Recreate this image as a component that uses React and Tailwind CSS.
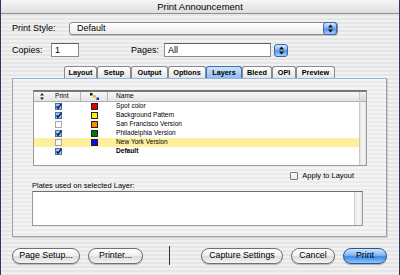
import React from 'react';

const tabs = [
  { label: 'Layout', w: 'w-[33px]' },
  { label: 'Setup', w: 'w-[34px]' },
  { label: 'Output', w: 'w-[37px]' },
  { label: 'Options', w: 'w-[38px]' },
  { label: 'Layers', w: 'w-[36px]', active: true },
  { label: 'Bleed', w: 'w-[30px]' },
  { label: 'OPI', w: 'w-[24px]' },
  { label: 'Preview', w: 'w-[39px]' },
];

const layers = [
  { name: 'Spot color', print: true, color: 'bg-[#e00000]' },
  { name: 'Background Pattern', print: true, color: 'bg-[#fff200]' },
  { name: 'San Francisco Version', print: false, color: 'bg-[#ff8a00]' },
  { name: 'Philadelphia Version', print: true, color: 'bg-[#007a00]' },
  { name: 'New York Version', print: false, color: 'bg-[#0010f0]', selected: true },
  { name: 'Default', print: true, color: '', bold: true },
];

// aqua blue up/down popup arrows
const Stepper = () => (
  <div className="w-[14px] h-[13px] rounded-[3px] border border-[#3568ad] bg-[linear-gradient(180deg,#d6eaff_0%,#79b0f0_48%,#4f8fe0_52%,#a9d0fa_100%)] flex items-center justify-center shrink-0">
    <svg width="5" height="9" viewBox="0 0 5 9">
      <path d="M2.5 0.5L5 3.5H0Z M2.5 8.5L0 5.5H5Z" fill="#101010" />
    </svg>
  </div>
);

const SmallCheck = ({ checked }) => (
  <svg width="7" height="7" viewBox="0 0 7 7">
    <rect x="0.5" y="0.5" width="6" height="6" fill={checked ? '#9cc3f0' : '#fbfbfb'} stroke={checked ? '#4a6fa8' : '#a8a8a8'} />
    {checked && <path d="M1.6 3.4L3 5.3L6.6 0.6" stroke="#0c1c50" strokeWidth="1.5" fill="none" />}
  </svg>
);

const AquaButton = ({ children, w }) => (
  <button className={`${w} h-[16px] rounded-full border border-[#707070] bg-[linear-gradient(180deg,#ffffff_0%,#f2f2f2_45%,#dcdcdc_55%,#f4f4f4_100%)] text-[8.8px] leading-none text-black flex items-center justify-center shadow-[0_1px_1px_rgba(0,0,0,0.25)]`}>
    {children}
  </button>
);

export default function App() {
  return (
    <div className="w-[400px] h-[275px] overflow-hidden border-x border-[#2c3a5c] bg-[repeating-linear-gradient(180deg,#f1f1f1_0px,#f1f1f1_2px,#e6e6e6_2px,#e6e6e6_4px)] font-['Liberation_Sans',Arial,sans-serif] text-black">
      {/* title bar */}
      <div className="h-[14px] border-b border-[#8c8c8c] bg-[linear-gradient(180deg,#f6f6f6,#dedede)] flex items-center justify-center text-[9.5px] leading-none">
        Print Announcement
      </div>

      <div className="px-[11px]">
        {/* print style */}
        <div className="mt-[8px] flex items-center h-[13px]">
          <span className="w-[57px] text-[9px] leading-none">Print Style:</span>
          <div className="w-[269px] h-[13px] rounded-[3px] border border-[#8a8a8a] bg-[linear-gradient(180deg,#ffffff,#ececec)] flex items-center justify-between pl-[7px] shadow-[0_1px_0_rgba(0,0,0,0.15)]">
            <span className="text-[9px] leading-none">Default</span>
            <Stepper />
          </div>
        </div>

        {/* copies / pages */}
        <div className="mt-[8px] flex items-center h-[14px]">
          <span className="w-[39px] text-[9px] leading-none">Copies:</span>
          <div className="w-[28px] h-[14px] border border-[#8a8a8a] border-t-[#5f5f5f] bg-white flex items-center pl-[3px] text-[9px] leading-none">1</div>
          <span className="ml-[52px] w-[33px] text-[9px] leading-none">Pages:</span>
          <div className="w-[107px] h-[14px] border border-[#8a8a8a] border-t-[#5f5f5f] bg-white flex items-center pl-[3px] text-[9px] leading-none">All</div>
          <div className="ml-[3px]">
            <Stepper />
          </div>
        </div>

        {/* tabs */}
        <div className="mt-[9px] flex pl-[52px] h-[12px]">
          {tabs.map((t) => (
            <div
              key={t.label}
              className={`${t.w} h-[12px] rounded-t-[3px] border border-b-0 ${
                t.active
                  ? 'border-[#3d6fb3] bg-[linear-gradient(180deg,#cfe4fb,#8dbcf0)]'
                  : 'border-[#8a8a8a] bg-[linear-gradient(180deg,#ffffff,#e4e4e4)]'
              } flex items-center justify-center text-[7.3px] font-bold leading-none`}
            >
              {t.label}
            </div>
          ))}
        </div>

        {/* panel */}
        <div className="w-[375px] h-[159px] border border-[#a2a2a2] border-t-[#8fb6e6] shadow-[1px_1px_0_rgba(0,0,0,0.12)] bg-[repeating-linear-gradient(180deg,#f4f4f4_0px,#f4f4f4_2px,#ebebeb_2px,#ebebeb_4px)] pt-[11px] px-[20px]">
          {/* layer list */}
          <div className="w-[334px] h-[76px] bg-white border border-[#9a9a9a] border-t-2 border-t-[#777] flex">
            <div className="flex-1">
              <div className="h-[10px] border-b border-[#b0b0b0] bg-[linear-gradient(180deg,#f8f8f8,#e3e3e3)] flex items-center text-[6.6px] leading-none">
                <div className="w-[47px] h-full border-r border-[#b5b5b5] flex items-center">
                  <svg className="ml-[6px]" width="4" height="7" viewBox="0 0 4 7">
                    <path d="M2 0L4 2.6H0Z M2 7L0 4.4H4Z" fill="#222" />
                  </svg>
                  <span className="ml-[11px]">Print</span>
                </div>
                <div className="w-[27px] h-full border-r border-[#b5b5b5] flex items-center justify-center">
                  <svg width="9" height="7" viewBox="0 0 9 7">
                    <rect x="0" y="0" width="2.5" height="2.5" fill="#111" />
                    <rect x="3.2" y="2.2" width="2.5" height="2.5" fill="#d8b800" />
                    <rect x="6.5" y="4.5" width="2.5" height="2.5" fill="#1530c0" />
                  </svg>
                </div>
                <span className="ml-[8px]">Name</span>
              </div>
              {layers.map((l) => (
                <div
                  key={l.name}
                  className={`h-[9px] flex items-center text-[6.6px] leading-none ${l.selected ? 'bg-[#fdef9c]' : ''}`}
                >
                  <div className="w-[47px] flex justify-center pl-[1px]">
                    <SmallCheck checked={l.print} />
                  </div>
                  <div className="w-[27px] flex justify-center">
                    {l.color && <div className={`w-[7px] h-[7px] border border-[#222] ${l.color}`} />}
                  </div>
                  <span className={`ml-[8px] ${l.bold ? 'font-bold' : ''}`}>{l.name}</span>
                </div>
              ))}
            </div>
            {/* scrollbar track */}
            <div className="w-[7px] border-l border-[#c8c8c8] bg-[linear-gradient(90deg,#e4e4e4,#f7f7f7,#e4e4e4)] flex flex-col">
              <div className="h-[10px] border-b border-[#b0b0b0] bg-[linear-gradient(180deg,#f0f0f0,#d6d6d6)]" />
            </div>
          </div>

          {/* apply to layout */}
          <div className="mt-[5px] flex items-center justify-end pr-[12px] h-[9px]">
            <div className="w-[8px] h-[8px] rounded-[1px] border border-[#777] bg-[linear-gradient(180deg,#ffffff,#e6e6e6)]" />
            <span className="ml-[4px] text-[7.5px] leading-none">Apply to Layout</span>
          </div>

          {/* plates */}
          <div className="mt-[2px] -ml-[1px] text-[7.5px] leading-none h-[9px]">Plates used on selected Layer:</div>
          <div className="-ml-[1px] w-[331px] h-[35px] bg-white border border-[#9a9a9a] border-t-[#6f6f6f] flex justify-end">
            <div className="w-[8px] h-full border-l border-[#d0d0d0] bg-[linear-gradient(90deg,#e8e8e8,#f8f8f8,#e8e8e8)]" />
          </div>
        </div>

        {/* buttons */}
        <div className="mt-[9px] flex items-center h-[19px]">
          <AquaButton w="w-[68px]">Page Setup...</AquaButton>
          <div className="ml-[8px]">
            <AquaButton w="w-[55px]">Printer...</AquaButton>
          </div>
          <div className="ml-[26px] w-[1px] h-[19px] bg-[#303030]" />
          <div className="ml-[31px]">
            <AquaButton w="w-[82px]">Capture Settings</AquaButton>
          </div>
          <div className="ml-[8px]">
            <AquaButton w="w-[44px]">Cancel</AquaButton>
          </div>
          <button className="ml-[8px] w-[44px] h-[16px] rounded-full border border-[#28549a] bg-[linear-gradient(180deg,#cde6ff_0%,#7fb6f2_45%,#3f86e4_55%,#8ec7fb_100%)] text-[8.8px] leading-none text-black flex items-center justify-center shadow-[0_1px_1px_rgba(0,0,0,0.3)]">
            Print
          </button>
        </div>
      </div>
    </div>
  );
}
